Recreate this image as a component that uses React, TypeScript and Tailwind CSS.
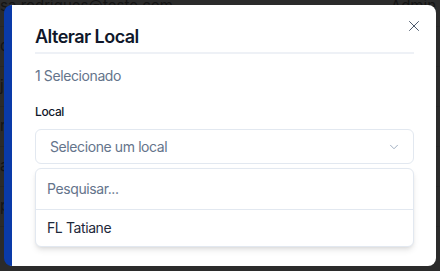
import { X, ChevronDown } from 'lucide-react'

const rows = [
  { email: 'sa.rodrigues@teste.com', role: 'Admin' },
  { email: 'carla.mendes@teste.com', role: 'Admin' },
  { email: 'joao.pereira@teste.com', role: 'Admin' },
  { email: 'ricardo.lima@teste.com', role: 'Gestor' },
  { email: 'ana.costa@teste.com', role: 'Admin' },
  { email: 'paula.souza@teste.com', role: 'Gestor' },
]

export default function App() {
  return (
    <div
      className="relative w-[440px] h-[271px] overflow-hidden bg-[#2b2b2b]"
      style={{ fontFamily: 'Inter, "Noto Sans", sans-serif' }}
    >
      {/* tabela atrás do overlay */}
      <div className="flex flex-col -mt-[13px] text-[15px] text-[#141414]">
        {rows.map(r => (
          <div key={r.email} className="flex justify-between h-[40px] items-center border-b border-[#262626] pr-[4px]">
            <span>{r.email}</span>
            <span>{r.role}</span>
          </div>
        ))}
      </div>

      {/* modal */}
      <div className="absolute left-[4px] top-[5px] w-[432px] h-[261px] bg-white rounded-lg border-l-8 border-[#0a3aa8] pl-[23px] pr-[22px] pt-[18px] tracking-[-0.025em]">
        <button className="absolute right-[13px] top-[12px] text-[#475569]">
          <X size={18} strokeWidth={1.3} />
        </button>

        <h2 className="text-lg leading-7 font-semibold tracking-[-0.03em] text-[#0f172a] border-b-2 border-[#eef1f6] pb-[1px]">
          Alterar Local
        </h2>

        <p className="mt-[12px] text-sm leading-5 text-[#64748b]">1 Selecionado</p>

        <label className="block mt-[18px] text-xs leading-4 font-medium text-[#0f172a]">Local</label>

        <div className="mt-[9px] h-[35px] flex items-center justify-between rounded-md border border-[#e2e8f0] pl-[14px] pr-[12px]">
          <span className="text-sm text-[#64748b]">Selecione um local</span>
          <ChevronDown size={14} strokeWidth={1.5} className="text-[#94a3b8]" />
        </div>

        <div className="mt-[4px] rounded-md border border-[#e2e8f0] bg-white shadow-md">
          <div className="h-[41px] flex items-center px-[11px] border-b border-[#e2e8f0] text-sm text-[#64748b]">
            Pesquisar...
          </div>
          <div className="h-[36px] flex items-center px-[11px] text-sm text-[#1e293b]">FL Tatiane</div>
        </div>
      </div>
    </div>
  )
}
